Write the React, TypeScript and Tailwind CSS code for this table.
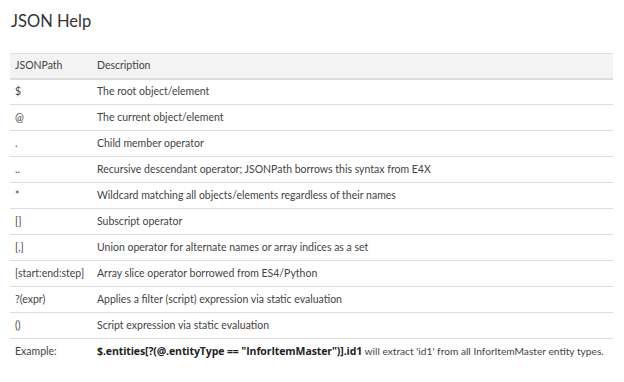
import React from 'react';

const rows: [string, React.ReactNode][] = [
  ['$', 'The root object/element'],
  ['@', 'The current object/element'],
  ['.', 'Child member operator'],
  ['..', 'Recursive descendant operator; JSONPath borrows this syntax from E4X'],
  ['*', 'Wildcard matching all objects/elements regardless of their names'],
  ['[]', 'Subscript operator'],
  ['[,]', 'Union operator for alternate names or array indices as a set'],
  ['[start:end:step]', 'Array slice operator borrowed from ES4/Python'],
  ['?(expr)', 'Applies a filter (script) expression via static evaluation'],
  ['()', 'Script expression via static evaluation'],
];

export default function App() {
  return (
    <div className="w-[624px] h-[382px] bg-white px-[10px] pt-[9px] text-[#444] font-['Lato','Open_Sans',sans-serif]">
      <h1 className="text-[16.5px] leading-[24px] text-[#333] mb-[20px] pl-px">JSON Help</h1>
      <table className="w-[603px] table-fixed border-collapse text-[10.5px]">
        <thead>
          <tr className="bg-[#f3f3f3] border-t border-[#ddd] border-b-2">
            <th className="font-normal text-left pl-[5px] w-[87px] h-[25px]">JSONPath</th>
            <th className="font-normal text-left">Description</th>
          </tr>
        </thead>
        <tbody>
          {rows.map(([k, v]) => (
            <tr key={k} className="border-b border-[#ddd]">
              <td className="pl-[5px] h-[26px] whitespace-nowrap">{k}</td>
              <td>{v}</td>
            </tr>
          ))}
          <tr>
            <td className="pl-[5px] h-[26px]">Example:</td>
            <td className="whitespace-nowrap">
              <b className="text-[#222] font-['Open_Sans',sans-serif] tracking-[-0.1px]">$.entities[?(@.entityType == "InforItemMaster")].id1</b>
              <span className="text-[10.2px]"> will extract 'id1' from all InforItemMaster entity types.</span>
            </td>
          </tr>
        </tbody>
      </table>
    </div>
  );
}
